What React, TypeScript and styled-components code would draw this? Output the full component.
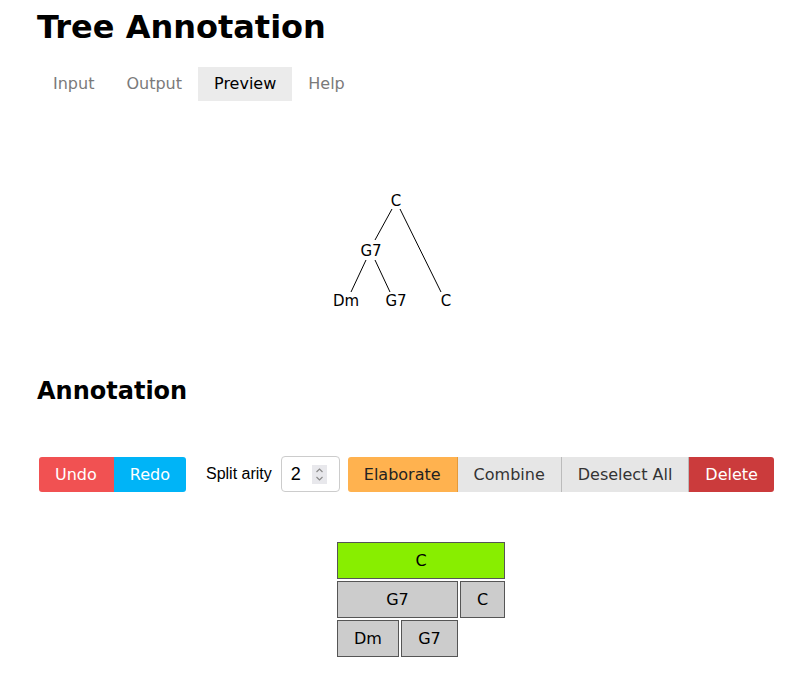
import React, { useState } from "react";
import styled, { createGlobalStyle } from "styled-components";

const GlobalStyle = createGlobalStyle`
  body {
    margin: 0;
    font-family: "DejaVu Sans", sans-serif;
    color: #000;
    background: #fff;
  }
`;

const Page = styled.div`
  padding: 0 37px;
`;

const Title = styled.h1`
  font-size: 32px;
  font-weight: bold;
  margin: 8px 0 21px;
`;

const Tabs = styled.nav`
  display: flex;
`;

const Tab = styled.div<{ $active?: boolean }>`
  padding: 0 16px;
  height: 34px;
  line-height: 34px;
  font-size: 16px;
  color: ${(p) => (p.$active ? "#000" : "#7a7a7a")};
  background: ${(p) => (p.$active ? "#ebebeb" : "transparent")};
`;

const TreeArea = styled.div`
  display: flex;
  justify-content: center;
  height: 276px;
  align-items: flex-start;
  padding-right: 16px;
`;

const Heading = styled.h2`
  font-size: 24px;
  font-weight: bold;
  margin: 0 0 51px;
`;

const Toolbar = styled.div`
  display: flex;
  align-items: center;
  padding-left: 2px;
  white-space: nowrap;
`;

const Group = styled.div`
  display: flex;
  flex-shrink: 0;
  border-radius: 3px;
  overflow: hidden;
`;

const Btn = styled.button<{ $bg: string; $fg: string; $edge?: string }>`
  font-family: "DejaVu Sans", sans-serif;
  font-size: 16px;
  height: 35px;
  padding: 0 16px;
  border: none;
  border-right: 1px solid ${(p) => p.$edge || "transparent"};
  background: ${(p) => p.$bg};
  color: ${(p) => p.$fg};
  white-space: nowrap;
  flex-shrink: 0;
  cursor: pointer;
  &:last-child {
    border-right: none;
  }
`;

const Label = styled.span`
  font-family: "Liberation Sans", Arial, sans-serif;
  font-size: 16px;
  margin: 0 9px 0 20px;
  flex-shrink: 0;
`;

const NumberBox = styled.div`
  display: flex;
  align-items: center;
  width: 59px;
  height: 36px;
  box-sizing: border-box;
  padding: 0 12px 0 9px;
  border: 1px solid #ccc;
  border-radius: 4px;
  margin-right: 8px;
  flex-shrink: 0;
`;

const NumberField = styled.input`
  font-family: "Liberation Sans", Arial, sans-serif;
  font-size: 18px;
  width: 100%;
  min-width: 0;
  border: none;
  outline: none;
  padding: 0;
  appearance: textfield;
  -moz-appearance: textfield;
  &::-webkit-inner-spin-button,
  &::-webkit-outer-spin-button {
    -webkit-appearance: none;
    margin: 0;
  }
`;

const Spinner = styled.div`
  flex-shrink: 0;
  width: 15px;
  height: 19px;
  background: #e8e8ec;
  display: flex;
  align-items: center;
  justify-content: center;
`;

const Grid = styled.div`
  display: grid;
  grid-template-columns: 62px 57px 45px;
  grid-auto-rows: 37px;
  gap: 2px;
  justify-content: center;
  margin-top: 50px;
  padding-left: 34px;
`;

const Cell = styled.div<{ $span: number; $selected?: boolean }>`
  grid-column: span ${(p) => p.$span};
  display: flex;
  align-items: center;
  justify-content: center;
  font-size: 16px;
  border: 1px solid #555;
  background: ${(p) => (p.$selected ? "#88ee00" : "#cccccc")};
`;

const Tree = () => (
  <svg width="160" height="130" viewBox="316 180 160 130" style={{ marginTop: 79 }}>
    <g stroke="#000" strokeWidth="1" fill="none">
      <line x1="392" y1="209" x2="375" y2="240" />
      <line x1="400" y1="209" x2="441" y2="292" />
      <line x1="366" y1="260" x2="351" y2="292" />
      <line x1="375" y1="260" x2="390" y2="292" />
    </g>
    <g fontFamily="DejaVu Sans, sans-serif" fontSize="15" textAnchor="middle" fill="#000">
      <text x="396" y="206">C</text>
      <text x="371" y="256">G7</text>
      <text x="346" y="306">Dm</text>
      <text x="396" y="306">G7</text>
      <text x="446" y="306">C</text>
    </g>
  </svg>
);

export default function App() {
  const [arity, setArity] = useState(2);
  const tabs = ["Input", "Output", "Preview", "Help"];
  return (
    <Page>
      <GlobalStyle />
      <Title>Tree Annotation</Title>
      <Tabs>
        {tabs.map((t) => (
          <Tab key={t} $active={t === "Preview"}>
            {t}
          </Tab>
        ))}
      </Tabs>
      <TreeArea>
        <Tree />
      </TreeArea>
      <Heading>Annotation</Heading>
      <Toolbar>
        <Group>
          <Btn $bg="#f15152" $fg="#fff">Undo</Btn>
          <Btn $bg="#00b4f7" $fg="#fff">Redo</Btn>
        </Group>
        <Label>Split arity</Label>
        <NumberBox>
          <NumberField
            type="number"
            value={arity}
            min={1}
            onChange={(e) => setArity(Number(e.currentTarget.value))}
          />
          <Spinner>
            <svg width="9" height="15" viewBox="0 0 9 15" fill="none" stroke="#8a8a8a" strokeWidth="1.2">
              <polyline points="1.5,5 4.5,2 7.5,5" />
              <polyline points="1.5,10 4.5,13 7.5,10" />
            </svg>
          </Spinner>
        </NumberBox>
        <Group>
          <Btn $bg="#ffb24f" $fg="#222" $edge="#e59a3a">Elaborate</Btn>
          <Btn $bg="#e6e6e6" $fg="#333" $edge="#bbb">Combine</Btn>
          <Btn $bg="#e6e6e6" $fg="#333" $edge="#bbb">Deselect All</Btn>
          <Btn $bg="#cb3b3c" $fg="#fff">Delete</Btn>
        </Group>
      </Toolbar>
      <Grid>
        <Cell $span={3} $selected>C</Cell>
        <Cell $span={2}>G7</Cell>
        <Cell $span={1}>C</Cell>
        <Cell $span={1}>Dm</Cell>
        <Cell $span={1}>G7</Cell>
      </Grid>
    </Page>
  );
}
